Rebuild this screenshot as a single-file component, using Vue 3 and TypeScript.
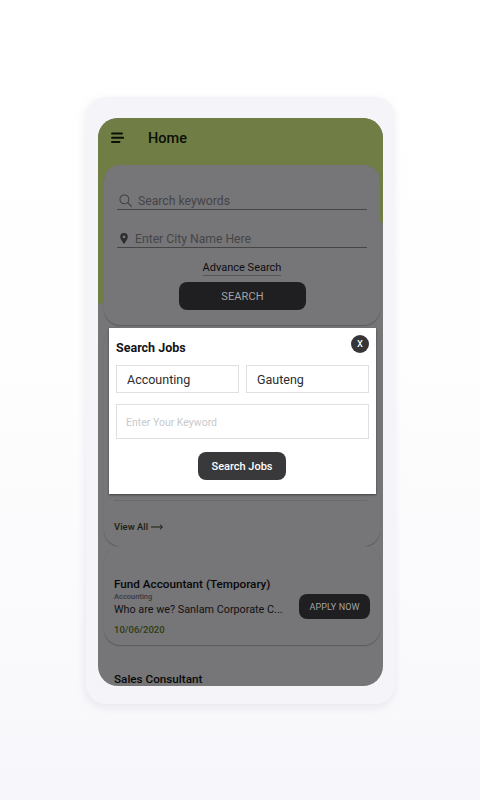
<script setup lang="ts">
const job = {
  title: 'Fund Accountant (Temporary)',
  category: 'Accounting',
  text: 'Who are we? Sanlam Corporate C...',
  date: '10/06/2020',
}
</script>

<template>
  <div class="page">
    <div class="frame">
      <div class="screen">
        <div class="hero"></div>
        <header class="bar">
          <svg class="menu" width="13" height="12" viewBox="0 0 13 12" aria-hidden="true">
            <path d="M1 1.5h10M1 5.8h11.5M1 10h7.5" stroke="#0c1006" stroke-width="1.9" stroke-linecap="round" fill="none" />
          </svg>
          <h1>Home</h1>
        </header>

        <section class="card search">
          <div class="field first">
            <svg width="13" height="13" viewBox="0 0 14 14" aria-hidden="true">
              <circle cx="5.8" cy="5.8" r="4.8" fill="none" stroke="#3f3f42" stroke-width="1.1" />
              <path d="M9.3 9.3l4 4" stroke="#3f3f42" stroke-width="1.3" stroke-linecap="round" />
            </svg>
            <span>Search keywords</span>
          </div>
          <div class="field second">
            <svg width="8" height="11" viewBox="0 0 8 11" aria-hidden="true">
              <path fill-rule="evenodd" d="M4 0a3.8 3.8 0 0 1 3.8 3.8C7.8 6.5 4 11 4 11S.2 6.5.2 3.8A3.8 3.8 0 0 1 4 0zm0 2.5a1.4 1.4 0 1 0 0 2.8 1.4 1.4 0 0 0 0-2.8z" fill="#2e2e31" />
            </svg>
            <span>Enter City Name Here</span>
          </div>
          <div class="advance">Advance Search</div>
          <div class="black-btn main">SEARCH</div>
        </section>

        <section class="card list">
          <div class="divider"></div>
          <div class="view">View All
            <svg width="12" height="6" viewBox="0 0 12 6" aria-hidden="true">
              <path d="M0 3h11M9 .8 11.6 3 9 5.2" stroke="#1c1f12" stroke-width="1" fill="none" />
            </svg>
          </div>
        </section>

        <section class="card job">
          <div class="info">
            <h2>{{ job.title }}</h2>
            <div class="cat">{{ job.category }}</div>
            <div class="text">{{ job.text }}</div>
            <div class="date">{{ job.date }}</div>
          </div>
          <div class="black-btn apply">APPLY NOW</div>
        </section>

        <section class="next">
          <h2>Sales Consultant</h2>
        </section>

        <div class="modal">
          <div class="close">x</div>
          <h3>Search Jobs</h3>
          <div class="selects">
            <div class="input">Accounting</div>
            <div class="input">Gauteng</div>
          </div>
          <div class="input keyword">Enter Your Keyword</div>
          <div class="modal-btn">Search Jobs</div>
        </div>
      </div>
    </div>
  </div>
</template>

<style>
html, body { margin: 0; background: #fff; }
</style>

<style scoped>
.page {
  width: 480px;
  height: 800px;
  box-sizing: border-box;
  padding: 97px 0 0 86px;
  overflow: hidden;
  background: linear-gradient(#ffffff 0%, #fefefe 45%, #f7f6fa 100%);
  font-family: Roboto, "Liberation Sans", sans-serif;
}
.frame {
  width: 309px;
  height: 607px;
  box-sizing: border-box;
  padding: 21px 12px 18px;
  border-radius: 20px;
  background: #f5f4f8;
  box-shadow: -1px 3px 8px rgba(190, 188, 200, .28);
}
.screen {
  position: relative;
  width: 285px;
  height: 568px;
  overflow: hidden;
  border-radius: 20px;
  background: #767577;
}
.hero {
  position: absolute;
  inset: 0 0 auto;
  height: 186px;
  background: #707e45;
  clip-path: polygon(0 0, 100% 0, 100% 104px, 0 186px);
}
.bar {
  position: relative;
  display: flex;
  align-items: center;
  height: 47px;
  padding-left: 13px;
  box-sizing: border-box;
}
.menu { margin-top: -7px; }
h1 {
  margin: -7px 0 0 24px;
  font-size: 14.5px;
  font-weight: 500;
  color: #0b0f05;
}
.card {
  position: relative;
  box-sizing: border-box;
  width: 276px;
  margin-left: 6px;
  background: #767577;
  border-radius: 16px;
  box-shadow: 0 1px 1px rgba(50, 50, 52, .4);
}
.search {
  height: 160px;
  padding: 27px 13px 0 13px;
}
.field {
  display: flex;
  align-items: center;
  height: 17px;
  border-bottom: 1px solid #454547;
  font-size: 12.2px;
  color: #454548;
}
.first { gap: 6px; padding-left: 2px; }
.second { margin-top: 20px; gap: 7px; padding-left: 3px; }
.advance {
  width: fit-content;
  margin: 14px auto 0;
  padding-bottom: 1px;
  border-bottom: 1px solid #555557;
  font-size: 11px;
  line-height: 12px;
  color: #0e0e10;
}
.black-btn {
  display: flex;
  align-items: center;
  justify-content: center;
  background: #1f1e20;
  color: #a3a3a6;
  border-radius: 8px;
  box-sizing: border-box;
}
.main {
  width: 127px;
  height: 28px;
  margin: 6px 0 0 62px;
  font-size: 11px;
  letter-spacing: .1px;
}
.list {
  height: 218px;
  margin-top: 3px;
  padding: 172px 13px 0 10px;
}
.divider {
  height: 1px;
  background: #6a696c;
}
.view {
  display: flex;
  align-items: center;
  gap: 3px;
  margin-top: 20px;
  font-size: 9.5px;
  font-weight: 500;
  color: #1c1f12;
}
.job {
  display: flex;
  height: 99px;
  margin-top: 0;
  padding: 31px 10px 0 10px;
}
.info { width: 185px; flex: none; }
h2 {
  margin: 0;
  font-size: 11.7px;
  line-height: 14px;
  font-weight: 500;
  color: #08080a;
}
.cat {
  font-size: 7.5px;
  line-height: 9px;
  font-weight: 500;
  color: #3a3a3d;
  margin-top: 1px;
}
.text {
  font-size: 10.8px;
  line-height: 14px;
  margin-top: 2px;
  color: #111113;
  white-space: nowrap;
}
.date {
  margin-top: 7px;
  font-size: 9.5px;
  line-height: 11px;
  font-weight: 500;
  color: #2f3d12;
}
.apply {
  width: 71px;
  height: 25px;
  margin-top: 17px;
  font-size: 9px;
  letter-spacing: .1px;
  flex: none;
}
.next { padding: 27px 0 0 16px; }
.modal {
  position: absolute;
  left: 11px;
  top: 210px;
  width: 267px;
  height: 166px;
  box-sizing: border-box;
  padding: 12px 7px 0;
  background: #fff;
  box-shadow: 0 1px 2px rgba(30, 30, 30, .6);
}
.modal h3 {
  margin: 0;
  font-size: 12.5px;
  line-height: 15px;
  font-weight: 700;
  color: #141416;
}
.close {
  position: absolute;
  top: 7px;
  right: 7px;
  width: 18px;
  height: 18px;
  border-radius: 50%;
  background: #363638;
  color: #fff;
  font-size: 12px;
  line-height: 17px;
  text-align: center;
}
.selects {
  display: flex;
  gap: 7px;
  margin-top: 10px;
}
.input {
  box-sizing: border-box;
  border: 1px solid #dfdfdf;
  color: #2c2c2e;
  font-size: 12.5px;
}
.selects .input {
  width: 123px;
  height: 28px;
  padding: 1px 0 0 10px;
  line-height: 26px;
}
.keyword {
  width: 253px;
  height: 35px;
  margin-top: 11px;
  padding: 1px 0 0 9px;
  line-height: 33px;
  font-size: 10.5px;
  color: #c9c9cb;
}
.modal-btn {
  display: flex;
  align-items: center;
  justify-content: center;
  width: 88px;
  height: 28px;
  margin: 13px 0 0 82px;
  border-radius: 8px;
  background: #39383a;
  color: #fff;
  font-size: 11px;
  font-weight: 500;
}
</style>
